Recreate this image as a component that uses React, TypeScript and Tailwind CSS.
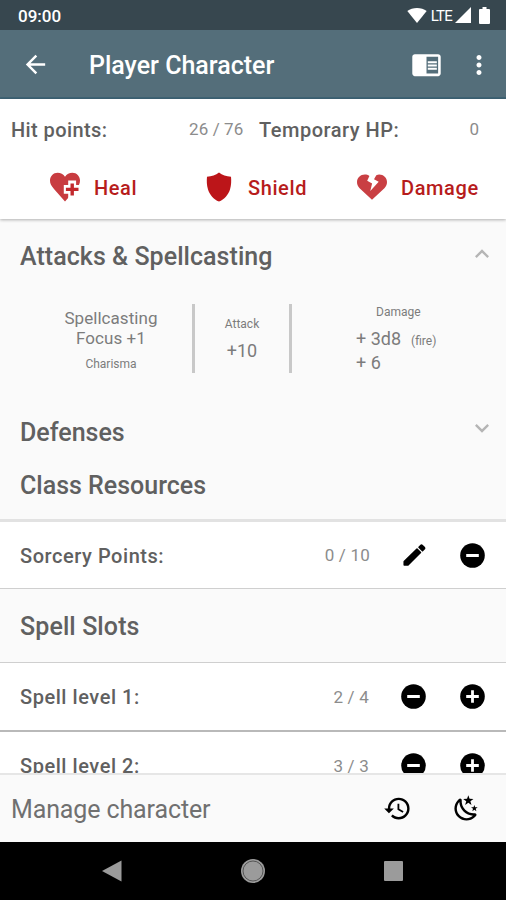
import type {ReactNode} from "react";
import {
    MdArrowBack,
    MdChromeReaderMode,
    MdExpandLess,
    MdExpandMore,
    MdHistory,
    MdMoreVert,
} from "react-icons/md";

function HealIcon() {
    return (
        <svg viewBox="0 0 30 30" className="h-[30px] w-[30px]">
            <path
                fill="#c83c40"
                d="M15 29.5 4.2 17.2C1.2 13.8 0 11.7 0 8.6 0 4 3.4.7 7.6.7c3 0 5.8 1.5 7.4 4C16.6 2.2 19.4.7 22.4.7 26.6.7 30 4 30 8.6c0 3.1-1.2 5.2-4.2 8.6Z"
            />
            <path fill="#fff" d="M18.2 8.500h7.900v4.600H30v8.600h-3.900v4.600h-7.900v-4.600h-4.400v-8.600h4.400Z" />
            <path fill="#c2292d" d="M20.5 11.500h3.400v4.300h4.600v3.200h-4.600v4.500h-3.400V19h-4.600v-3.200h4.600Z" />
        </svg>
    );
}

function ShieldIcon() {
    return (
        <svg viewBox="0 0 26 30" className="h-[30px] w-[26px]">
            <path
                fill="#bc1519"
                d="M13 .5c3.200 2.500 7.300 3.900 12 4.200.4 4 .3 8.500-1 12.700-1.700 5.400-5.600 9.700-11 12.200C7.600 27.100 3.700 22.800 2 17.400.7 13.200.6 8.700 1 4.700 5.700 4.400 9.800 3 13 .5Z"
            />
        </svg>
    );
}

function DamageIcon() {
    return (
        <svg viewBox="0 0 30 26" className="h-[26px] w-[30px]">
            <path
                fill="#c93f43"
                d="M15 25.700 2.600 14.300C.8 12.500 0 10.400 0 8.100 0 3.700 3.500.5 7.800.5c1.700 0 3.200.5 4.600 1.400L10.200 6.700l4.900 2.700-1.800 7.600 8.400-9.300-4.700-2.500 2.300-4C20.300.7 21.300.5 22.200.5c4.300 0 7.800 3.200 7.800 7.600 0 2.300-.8 4.400-2.600 6.200Z"
            />
        </svg>
    );
}

function PencilIcon() {
    return (
        <svg viewBox="0 0 24 24" className="h-[24px] w-[24px]" fill="currentColor" stroke="currentColor" strokeLinejoin="round" strokeWidth="1.5">
            <path d="M2.200 18.500 15 6l3.500 3.500L6 22H2.200Z" />
            <path d="m17 4.200 1.700-1.700q.8-.8 1.600 0l1.900 1.900q.8.8 0 1.600l-1.700 1.700Z" />
        </svg>
    );
}

function MinusIcon() {
    return (
        <svg viewBox="0 0 25 25" className="h-[25px] w-[25px]">
            <circle cx="12.500" cy="12.500" r="12.300" fill="currentColor" />
            <path d="M6.200 12.500h12.600" stroke="#fff" strokeWidth="3" />
        </svg>
    );
}

function PlusIcon() {
    return (
        <svg viewBox="0 0 25 25" className="h-[25px] w-[25px]">
            <circle cx="12.500" cy="12.500" r="12.300" fill="currentColor" />
            <path d="M6.200 12.500h12.600M12.500 6.200v12.600" stroke="#fff" strokeWidth="2.800" />
        </svg>
    );
}

function RestIcon() {
    return (
        <svg viewBox="0 0 24 24" className="h-[29px] w-[29px]" fill="currentColor">
            <path d="M17.750 4.090 15.220 6.030 16.130 9.090 13.500 7.280 10.870 9.090 11.780 6.030 9.250 4.090 12.440 4 13.500 1 14.560 4ZM21.250 11 19.610 12.250 20.200 14.230 18.500 13.060 16.800 14.230 17.390 12.250 15.750 11 17.810 10.950 18.500 9 19.190 10.950ZM18.970 15.950C19.800 15.870 20.690 17.050 20.160 17.800 19.840 18.250 19.500 18.670 19.080 19.070 15.170 23 8.840 23 4.940 19.070 1.030 15.170 1.030 8.830 4.940 4.930 5.340 4.530 5.760 4.170 6.210 3.850 6.960 3.320 8.140 4.210 8.060 5.040 7.790 7.900 8.750 10.870 10.950 13.060 13.140 15.260 16.100 16.220 18.970 15.950M17.330 17.970C14.500 17.810 11.700 16.640 9.530 14.500 7.360 12.310 6.200 9.500 6.040 6.680 3.230 9.820 3.340 14.640 6.350 17.660 9.370 20.670 14.190 20.780 17.330 17.970Z" />
        </svg>
    );
}

function StatusBar() {
    return (
        <div className="flex h-[30px] shrink-0 items-center bg-[#37474f] pr-[16px] pl-[18px] text-white">
            <span className="pt-[3px] text-[17px] font-medium">09:00</span>
            <svg viewBox="0 0 20 15" className="ml-auto h-[15px] w-[20px]" fill="currentColor">
                <path d="M10 15 .3 3C3 1 6.300 0 10 0s7 1 9.700 3Z" />
            </svg>
            <span className="ml-[4px] pt-[2px] text-[15px] tracking-[-0.8px]">LTE</span>
            <svg viewBox="0 0 16 16" className="ml-[3px] h-[16px] w-[16px]" fill="currentColor">
                <path d="M16 0v16H0Z" />
            </svg>
            <svg viewBox="0 0 11 17" className="ml-[8px] h-[17px] w-[11px]" fill="currentColor">
                <path d="M3.500 0h4v2H10q1 0 1 1v13q0 1-1 1H1q-1 0-1-1V3q0-1 1-1h2.500Z" />
            </svg>
        </div>
    );
}

function ActionButton({icon, label, className}: {icon: ReactNode; label: string; className: string}) {
    return (
        <button type="button" className={`flex items-center text-[20px] font-medium tracking-[0.6px] text-[#b71c1c] ${className}`}>
            {icon}
            <span className="pt-[2px]">{label}</span>
        </button>
    );
}

function ResourceRow({label, value, children, className}: {
    label: string;
    value: string;
    children: ReactNode;
    className: string;
}) {
    return (
        <div className={`flex shrink-0 items-center bg-white pr-[21px] pl-[20px] ${className}`}>
            <span className="pt-[1px] text-[20px] font-medium tracking-[0.55px]">{label}</span>
            <span className="mr-[32px] ml-auto pt-[2px] text-[17px] tracking-[0.2px] text-[#8c8c8c]">{value}</span>
            <div className="flex items-center gap-[34px] text-black">{children}</div>
        </div>
    );
}

export default function App() {
    return (
        <div className="flex h-[900px] w-[506px] flex-col overflow-hidden bg-[#fafafa] font-['Roboto',sans-serif] text-[#606060]">
            <StatusBar />
            <header className="flex h-[69px] shrink-0 items-center border-b-2 border-[#3f6475] bg-[#546e7a] pt-[2px] pr-[12px] pl-[21px] text-white">
                <MdArrowBack size={29} />
                <h1 className="ml-[39px] pt-[3px] text-[25px] font-medium">Player Character</h1>
                <MdChromeReaderMode size={31} className="ml-auto" />
                <MdMoreVert size={30} className="ml-[22px]" />
            </header>

            <section className="z-10 h-[120px] shrink-0 bg-white shadow-[0_1px_3px_rgba(0,0,0,0.3)]">
                <div className="flex h-[60px] items-center pt-[1px] pl-[11px] text-[20px] font-medium">
                    <span className="w-[178px] tracking-[0.4px]">Hit points:</span>
                    <span className="w-[70px] text-[17px] font-normal tracking-[0.1px] text-[#8c8c8c]">26 / 76</span>
                    <span className="tracking-[0.5px]">Temporary HP:</span>
                    <span className="mr-[27px] ml-auto text-[17px] font-normal text-[#8c8c8c]">0</span>
                </div>
                <div className="flex h-[56px] items-center pl-[50px]">
                    <ActionButton icon={<HealIcon />} label="Heal" className="w-[156px] gap-[14px]" />
                    <ActionButton icon={<ShieldIcon />} label="Shield" className="w-[151px] gap-[16px]" />
                    <ActionButton icon={<DamageIcon />} label="Damage" className="gap-[14px]" />
                </div>
            </section>

            <main className="flex h-[554px] shrink-0 flex-col overflow-hidden">
                <div className="flex h-[74px] shrink-0 items-center justify-between pr-[10px] pl-[20px]">
                    <h2 className="pt-[2px] text-[25px] font-medium tracking-[0.05px]">Attacks &amp; Spellcasting</h2>
                    <MdExpandLess size={28} className="mb-[5px] text-[#b5b5b5]" />
                </div>
                <div className="mt-[11px] flex h-[69px] shrink-0 items-center text-[#7c7c7c]">
                    <div className="flex w-[192px] flex-col items-center pt-[2px] pl-[30px] text-center">
                        <span className="text-[17px] leading-[20px] tracking-[0.05px]">
                            Spellcasting
                            <br />
                            Focus +1
                        </span>
                        <span className="mt-[8px] text-[12px] leading-[16px]">Charisma</span>
                    </div>
                    <div className="flex h-[69px] w-[100px] flex-col items-center border-x-[3px] border-[#c8c8c8] pt-[12px]">
                        <span className="text-[12px] leading-[16px]">Attack</span>
                        <span className="mt-[8px] text-[18px] leading-[22px]">+10</span>
                    </div>
                    <div className="flex flex-1 flex-col pl-[64px]">
                        <span className="pl-[20px] text-[12px] leading-[16px]">Damage</span>
                        <div className="mt-[8px] flex items-baseline text-[18px] leading-[22px]">
                            + 3d8 <span className="ml-[10px] text-[12px]">(fire)</span>
                        </div>
                        <span className="text-[18px] leading-[21px]">+ 6</span>
                    </div>
                </div>
                <div className="mt-[32px] flex h-[53px] shrink-0 items-center justify-between pr-[10px] pl-[20px]">
                    <h2 className="pt-[2px] text-[25px] font-medium">Defenses</h2>
                    <MdExpandMore size={28} className="mb-[7px] text-[#b5b5b5]" />
                </div>
                <h2 className="flex h-[61px] shrink-0 items-center pb-[6px] pl-[20px] text-[25px] font-medium">
                    Class Resources
                </h2>
                <ResourceRow label="Sorcery Points:" value="0 / 10" className="h-[70px] border-t-[3px] border-b border-t-[#e2e2e2] border-b-[#cfcfcf]">
                    <PencilIcon />
                    <MinusIcon />
                </ResourceRow>
                <h2 className="flex h-[73px] shrink-0 items-center pt-[2px] pl-[20px] text-[25px] font-medium tracking-[0.1px]">
                    Spell Slots
                </h2>
                <ResourceRow label="Spell level 1:" value="2 / 4" className="h-[70px] border-t border-b-2 border-t-[#cfcfcf] border-b-[#b9b9b9]">
                    <MinusIcon />
                    <PlusIcon />
                </ResourceRow>
                <ResourceRow label="Spell level 2:" value="3 / 3" className="h-[67px]">
                    <MinusIcon />
                    <PlusIcon />
                </ResourceRow>
            </main>

            <footer className="flex h-[69px] shrink-0 items-center border-t-2 border-[#e6e6e6] bg-[#fafafa] pr-[25px] pl-[11px]">
                <span className="pt-[2px] text-[25px] tracking-[-0.12px] text-[#707070]">Manage character</span>
                <MdHistory size={29} className="ml-auto text-black" />
                <span className="ml-[40px] text-black">
                    <RestIcon />
                </span>
            </footer>

            <nav className="flex h-[58px] shrink-0 items-center bg-black pl-[102px] text-[#9b9b9b]">
                <svg viewBox="0 0 20 22" className="h-[22px] w-[20px]" fill="currentColor">
                    <path d="M19.500.500v21L0 11Z" />
                </svg>
                <svg viewBox="0 0 24 24" className="ml-[119px] h-[24px] w-[24px]" fill="currentColor">
                    <circle cx="12" cy="12" r="12" />
                    <circle cx="12" cy="12" r="10" fill="none" stroke="#555" />
                </svg>
                <span className="ml-[119px] h-[20px] w-[19px] rounded-[1px] bg-[#9b9b9b]" />
            </nav>
        </div>
    );
}
